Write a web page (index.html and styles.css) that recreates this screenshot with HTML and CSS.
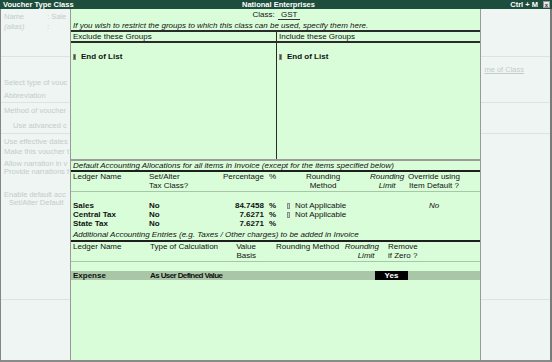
FILE: index.html
```html
<!DOCTYPE html>
<html>
<head>
<meta charset="utf-8">
<link rel="stylesheet" href="styles.css">
</head>
<body>
<div class="win">
  <div class="titlebar">
    <span class="t-left">Voucher Type Class</span>
    <span class="t-center">National Enterprises</span>
    <span class="t-right">Ctrl + M <span class="t-close">x</span></span>
  </div>
  <div class="frame">
    <div class="bgform">
      <div class="bg-row bg-first"><span class="bg-lbl">Name</span><span>: Sale</span></div>
      <div class="bg-row"><span class="bg-lbl it">(alias)</span><span>:</span></div>
      <div class="bg-line bg-gap25"></div>
      <div class="bg-row bg-right"><span class="bg-ul">me of Class</span></div>
      <div class="bg-row bg-m3">Select type of vouc</div>
      <div class="bg-row bg-m3">Abbreviation</div>
      <div class="bg-line bg-gap2"></div>
      <div class="bg-row bg-m3">Method of voucher</div>
      <div class="bg-row bg-m5 bg-ind">Use advanced c</div>
      <div class="bg-line bg-gap3"></div>
      <div class="bg-row bg-m3">Use effective dates</div>
      <div class="bg-row">Make this voucher t</div>
      <div class="bg-row bg-m3 bg-tight">Allow narration in v</div>
      <div class="bg-row bg-tight">Provide narrations f</div>
      <div class="bg-row bg-m15 bg-tight">Enable default acc</div>
      <div class="bg-row bg-tight bg-ind2">Set/Alter Default</div>
      <div class="bg-line bg-last"></div>
    </div>

    <div class="panel">
      <div class="cls">Class: <span class="cls-val">GST</span></div>
      <div class="hint">If you wish to restrict the groups to which this class can be used, specify them here.</div>
      <div class="groups">
        <div class="gcol">
          <div class="ghead">Exclude these Groups</div>
          <div class="gbody"><i class="mk"></i><b>End of List</b></div>
        </div>
        <div class="gcol">
          <div class="ghead">Include these Groups</div>
          <div class="gbody"><i class="mk"></i><b>End of List</b></div>
        </div>
      </div>

      <div class="sec-title sec-first">Default Accounting Allocations for all items in Invoice (except for the items specified below)</div>
      <div class="alloc ahead">
        <div>Ledger Name</div>
        <div>Set/Alter<br>Tax Class?</div>
        <div class="ra">Percentage<span class="pct">%</span></div>
        <div class="ca">Rounding<br>Method</div>
        <div class="ra it">Rounding<br>Limit&nbsp;&nbsp;</div>
        <div class="ca ov">Override using<br>Item Default ?</div>
      </div>
      <div class="alloc adata adata-first">
        <div>Sales</div>
        <div>No</div>
        <div class="ra">84.7458<span class="pct">%</span></div>
        <div class="rm"><i class="mk lt"></i><span class="nb">Not Applicable</span></div>
        <div></div>
        <div class="ca ov it nb">No</div>
      </div>
      <div class="alloc adata">
        <div>Central Tax</div>
        <div>No</div>
        <div class="ra">7.6271<span class="pct">%</span></div>
        <div class="rm"><i class="mk lt"></i><span class="nb">Not Applicable</span></div>
        <div></div>
        <div></div>
      </div>
      <div class="alloc adata">
        <div>State Tax</div>
        <div>No</div>
        <div class="ra">7.6271<span class="pct">%</span></div>
        <div></div>
        <div></div>
        <div></div>
      </div>

      <div class="sec-title sec-second">Additional Accounting Entries (e.g. Taxes / Other charges) to be added in Invoice</div>
      <div class="addl ahead">
        <div>Ledger Name</div>
        <div>Type of Calculation</div>
        <div class="ra">Value<br>Basis</div>
        <div class="pl20">Rounding Method</div>
        <div class="ra it">Rounding<br>Limit&nbsp;&nbsp;</div>
        <div class="pl9">Remove<br>if Zero ?</div>
      </div>
      <div class="exp-row">
        <span class="exp-name">Expense</span>
        <span class="exp-type">As User Defined Value</span>
        <span class="yes">Yes</span>
      </div>
    </div>
  </div>
</div>
</body>
</html>
```

FILE: styles.css
```css
* { box-sizing: border-box; }
html, body { margin: 0; padding: 0; }
body {
  width: 552px;
  height: 362px;
  overflow: hidden;
  font-family: "Liberation Sans", Arial, sans-serif;
  font-size: 8px;
  color: #111;
  background: #eef5f3;
}
.win {
  width: 552px;
  height: 362px;
  display: flex;
  flex-direction: column;
}
.titlebar {
  height: 9px;
  background: #1d4d3c;
  color: #fff;
  font-weight: bold;
  font-size: 7.5px;
  line-height: 9px;
  display: grid;
  grid-template-columns: 1fr auto 1fr;
  padding: 0 2px 0 3px;
  white-space: nowrap;
}
.t-center { padding-left: 4px; }
.t-right { justify-self: end; display: flex; align-items: center; gap: 5px; }
.t-close {
  display: inline-block;
  width: 7px;
  height: 7px;
  background: #e4e8e6;
  color: #333;
  font-size: 6px;
  line-height: 6px;
  text-align: center;
  border: 1px solid #999;
}
.frame {
  flex: 1;
  position: relative;
  border-left: 1px solid #858585;
  border-right: 2px solid #7a7a7a;
  border-bottom: 2px solid #8a8a8a;
  background: #eef5f3;
  overflow: hidden;
}

/* faded background form (only the parts beside the panel are visible) */
.bgform {
  display: flex;
  flex-direction: column;
  color: #c4ccca;
  font-size: 7.5px;
}
.bg-row {
  height: 10px;
  line-height: 10px;
  white-space: nowrap;
  margin-left: 3px;
}
.bg-first { margin-top: 3px; }
.bg-lbl { display: inline-block; width: 43px; }
.it { font-style: italic; }
.bg-line { border-bottom: 1px solid #dce3e1; }
.bg-gap25 { height: 25px; }
.bg-gap2 { height: 2px; }
.bg-gap3 { height: 3px; }
.bg-right {
  margin-top: 8px;
  align-self: flex-end;
  margin-right: 26px;
}
.bg-ul { text-decoration: underline; }
.bg-m3 { margin-top: 3px; }
.bg-m5 { margin-top: 5px; }
.bg-m15 { margin-top: 15px; }
.bg-ind { padding-left: 9px; }
.bg-ind2 { padding-left: 5px; }
.bg-tight { height: 8px; line-height: 8px; }
.bg-last { height: 93px; }

/* overlay panel */
.panel {
  position: absolute;
  left: 69px;
  top: 0;
  bottom: 0;
  width: 411px;
  background: #d9fdd8;
  border-left: 1px solid #9a9a9a;
  border-right: 1px solid #9a9a9a;
  display: flex;
  flex-direction: column;
  white-space: nowrap;
}
.cls {
  height: 11px;
  padding-top: 1px;
  line-height: 9px;
  text-align: center;
  padding-left: 2px;
}
.cls-val {
  display: inline-block;
  padding: 0 3px;
  margin-left: 1px;
  line-height: 9px;
  border-bottom: 1px solid #333;
}
.hint {
  height: 10px;
  padding-top: 1px;
  line-height: 9px;
  font-style: italic;
  padding-left: 2px;
}
.groups {
  display: grid;
  grid-template-columns: 205px 1fr;
  border-top: 2px solid #2b2b2b;
  height: 129px;
}
.gcol + .gcol { border-left: 1px solid #2b2b2b; }
.ghead {
  height: 11px;
  line-height: 9px;
  padding-left: 2px;
  border-bottom: 2px solid #2b2b2b;
}
.gbody {
  padding: 9px 0 0 2px;
  line-height: 9px;
  display: flex;
  align-items: center;
  gap: 5px;
}
.mk {
  display: inline-block;
  width: 3px;
  height: 6px;
  background: #4d4d3d;
  border: 1px solid #8a8a7a;
}
.mk.lt {
  background: #c8d4c0;
  border-color: #8b8b8b;
}

.sec-title {
  font-style: italic;
  padding-left: 2px;
  border-bottom: 2px solid #1e1e1e;
}
.sec-first {
  border-top: 2px solid #9b9b9b;
  height: 13px;
  line-height: 9px;
}
.sec-second {
  height: 14px;
  padding-top: 1px;
  line-height: 11px;
}

.alloc {
  display: grid;
  grid-template-columns: 76px 57px 70px 94px 30px 64px;
  padding-left: 2px;
  line-height: 9px;
}
.ahead {
  padding-bottom: 1px;
  border-bottom: 1px solid #a9c7a8;
}
.adata { font-weight: bold; }
.adata-first { margin-top: 9px; }
.ra { text-align: right; }
.ca { text-align: center; }
.ov { padding-left: 4px; }
.pct { margin-left: 5px; }
.rm { padding-left: 11px; display: flex; align-items: center; gap: 5px; }
.nb { font-weight: normal; }

.addl {
  display: grid;
  grid-template-columns: 77px 82px 24px 78px 45px 59px;
  padding-left: 2px;
  line-height: 9px;
}
.pl20 { padding-left: 20px; }
.pl9 { padding-left: 9px; }

.exp-row {
  margin-top: 9px;
  height: 9px;
  line-height: 9px;
  background: #a9c7a7;
  display: flex;
  padding-left: 2px;
  font-weight: bold;
}
.exp-name { width: 77px; }
.exp-type { width: 225px; letter-spacing: -0.6px; }
.yes {
  width: 33px;
  background: #000;
  color: #fff;
  text-align: center;
}
```
